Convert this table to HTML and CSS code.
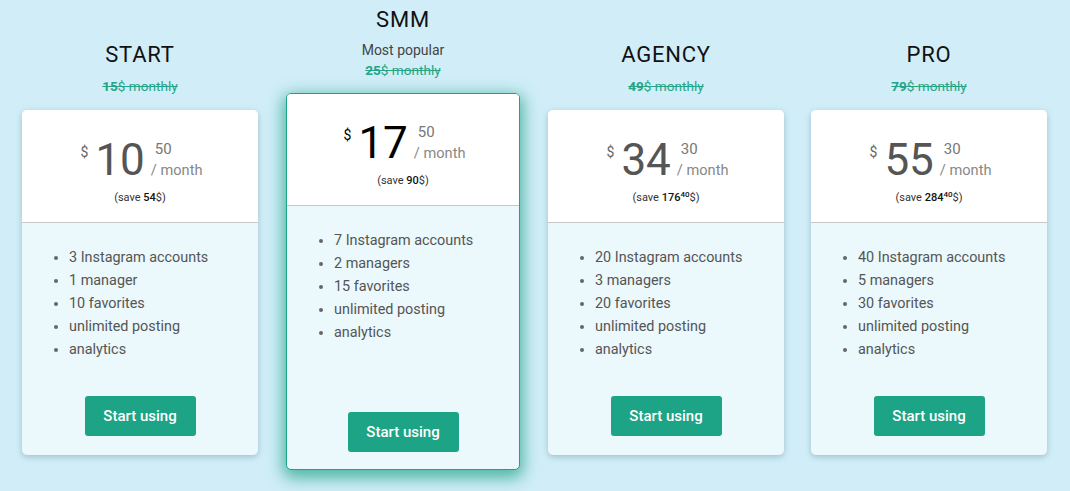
FILE: index.html
```html
<!DOCTYPE html>
<html lang="en">
<head>
<meta charset="utf-8">
<title>Pricing</title>
<link rel="stylesheet" href="styles.css">
</head>
<body>
<div class="plans">
  <div class="col">
    <h2 class="title">START</h2>
    <div class="old"><b>15</b>$ monthly</div>
    <div class="card">
      <div class="card-head">
        <div class="price">
          <span class="cur">$</span>
          <span class="big">10</span>
          <span class="side"><span class="cents">50</span><span class="per">/ month</span></span>
        </div>
        <div class="save">(save <b>54</b>$)</div>
      </div>
      <div class="card-body">
        <ul class="features">
          <li>3 Instagram accounts</li>
          <li>1 manager</li>
          <li>10 favorites</li>
          <li>unlimited posting</li>
          <li>analytics</li>
        </ul>
        <button class="btn">Start using</button>
      </div>
    </div>
  </div>
  <div class="col featured">
    <h2 class="title">SMM</h2>
    <div class="popular">Most popular</div>
    <div class="old"><b>25</b>$ monthly</div>
    <div class="card">
      <div class="card-head">
        <div class="price">
          <span class="cur">$</span>
          <span class="big">17</span>
          <span class="side"><span class="cents">50</span><span class="per">/ month</span></span>
        </div>
        <div class="save">(save <b>90</b>$)</div>
      </div>
      <div class="card-body">
        <ul class="features">
          <li>7 Instagram accounts</li>
          <li>2 managers</li>
          <li>15 favorites</li>
          <li>unlimited posting</li>
          <li>analytics</li>
        </ul>
        <button class="btn">Start using</button>
      </div>
    </div>
  </div>
  <div class="col">
    <h2 class="title">AGENCY</h2>
    <div class="old"><b>49</b>$ monthly</div>
    <div class="card">
      <div class="card-head">
        <div class="price">
          <span class="cur">$</span>
          <span class="big">34</span>
          <span class="side"><span class="cents">30</span><span class="per">/ month</span></span>
        </div>
        <div class="save">(save <b>176<sup>40</sup></b>$)</div>
      </div>
      <div class="card-body">
        <ul class="features">
          <li>20 Instagram accounts</li>
          <li>3 managers</li>
          <li>20 favorites</li>
          <li>unlimited posting</li>
          <li>analytics</li>
        </ul>
        <button class="btn">Start using</button>
      </div>
    </div>
  </div>
  <div class="col">
    <h2 class="title">PRO</h2>
    <div class="old"><b>79</b>$ monthly</div>
    <div class="card">
      <div class="card-head">
        <div class="price">
          <span class="cur">$</span>
          <span class="big">55</span>
          <span class="side"><span class="cents">30</span><span class="per">/ month</span></span>
        </div>
        <div class="save">(save <b>284<sup>40</sup></b>$)</div>
      </div>
      <div class="card-body">
        <ul class="features">
          <li>40 Instagram accounts</li>
          <li>5 managers</li>
          <li>30 favorites</li>
          <li>unlimited posting</li>
          <li>analytics</li>
        </ul>
        <button class="btn">Start using</button>
      </div>
    </div>
  </div>
</div>
</body>
</html>
```
FILE: styles.css
```css
* { box-sizing: border-box; }
html, body {
  margin: 0;
  padding: 0;
  background: #d1eef8;
  font-family: Roboto, "Liberation Sans", sans-serif;
  height: 100%;
}
.plans {
  display: grid;
  grid-template-columns: repeat(4, 1fr);
  column-gap: 27px;
  padding: 7px 23px 0 22px;
  align-items: start;
}
.col {
  display: flex;
  flex-direction: column;
  align-items: stretch;
  padding-top: 35px;
}
.col.featured { padding-top: 0; }
.title {
  margin: 0;
  font-size: 22px;
  font-weight: 400;
  letter-spacing: 0.8px;
  line-height: 26px;
  color: #111;
  text-align: center;
}
.popular {
  margin-top: 8px;
  font-size: 14px;
  line-height: 19px;
  color: #444;
  text-align: center;
}
.old {
  font-size: 13.6px;
  line-height: 20px;
  color: #26a586;
  text-align: center;
  text-decoration: line-through;
  margin-top: 8px;
}
.featured .old { margin-top: 0; }
.old b { font-weight: 700; }
.card {
  margin-top: 14px;
  height: 345px;
  background: #ebf8fc;
  border-radius: 5px;
  box-shadow: 0 2px 6px rgba(60, 110, 130, 0.35);
  display: flex;
  flex-direction: column;
  overflow: hidden;
}
.featured .card {
  height: 377px;
  margin: 13px 1px 0 1px;
  border: 1px solid #1da385;
  box-shadow: 0 5px 16px 3px rgba(26, 160, 130, 0.72);
}
.card-head {
  background: #fff;
  border-bottom: 1px solid #c8c8c8;
  height: 113px;
  padding-top: 27px;
  text-align: center;
}
.featured .card-head { padding-top: 26px; height: 112px; }
.price {
  display: flex;
  justify-content: center;
  align-items: flex-start;
  padding-left: 3px;
}
.cur {
  font-size: 14px;
  line-height: 14px;
  color: #666;
  margin-top: 8px;
  margin-right: 7px;
}
.big {
  font-size: 44px;
  line-height: 46px;
  font-weight: 400;
  color: #555;
}
.featured .big { color: #000; }
.featured .cur { color: #000; }
.side {
  display: flex;
  flex-direction: column;
  align-items: flex-start;
  margin-left: 6px;
  padding-top: 3px;
}
.cents {
  font-size: 15px;
  line-height: 18px;
  color: #777;
  margin-left: 4px;
}
.per {
  font-size: 14.6px;
  line-height: 20px;
  color: #888;
  margin-top: 2px;
}
.save {
  margin-top: 8px;
  font-size: 11px;
  color: #333;
}
.save b { font-weight: 500; color: #111; }
.save sup { font-size: 8px; line-height: 0; vertical-align: 4px; }
.card-body {
  flex: 1;
  display: flex;
  flex-direction: column;
  align-items: center;
  padding: 23px 0 19px;
}
.featured .card-body { padding: 23px 0 17px; }
.features {
  align-self: stretch;
  margin: 0;
  padding: 0 0 0 47px;
  font-size: 14.4px;
  line-height: 23px;
  color: #555;
}
.features li::marker { color: #666; }
.btn {
  margin-top: auto;
  height: 40px;
  width: 111px;
  border: 0;
  border-radius: 3px;
  background: #1da385;
  color: #fff;
  font-family: Roboto, "Liberation Sans", sans-serif;
  font-size: 15px;
  font-weight: 500;
  cursor: pointer;
}
```
